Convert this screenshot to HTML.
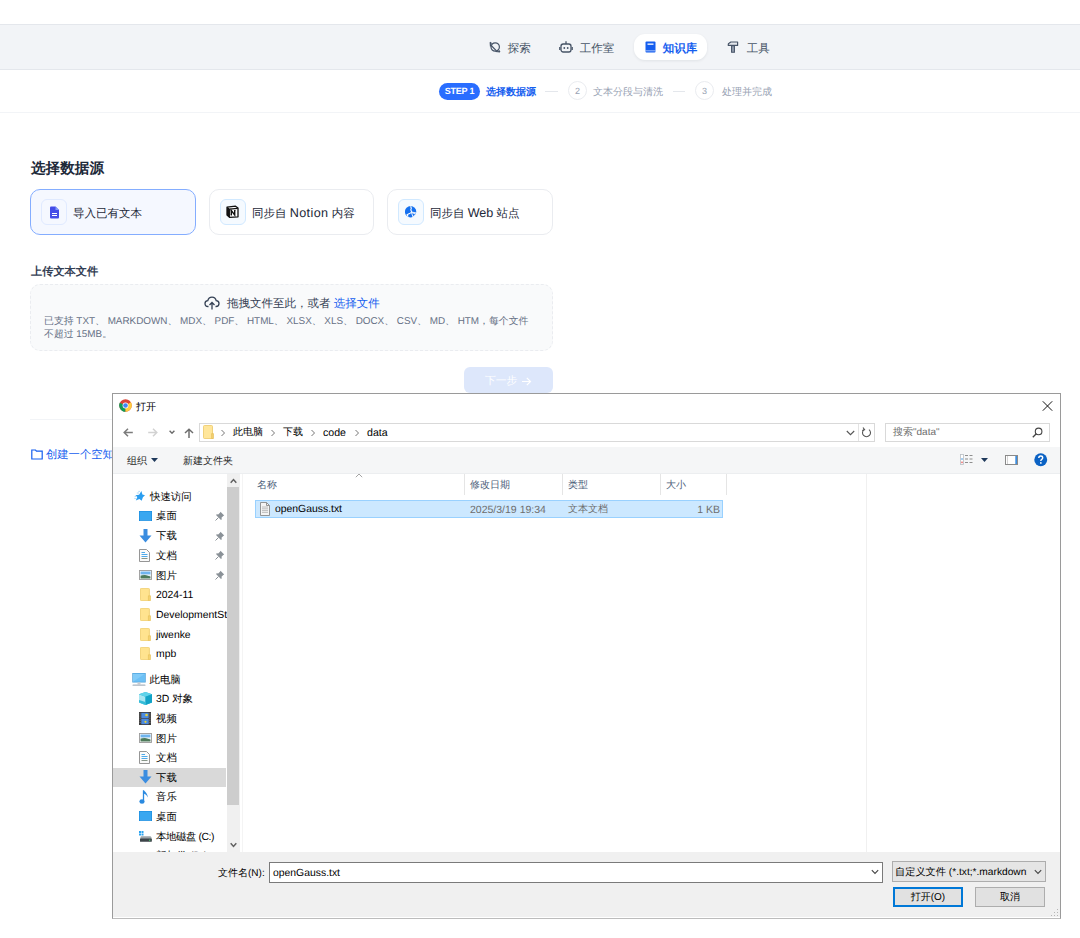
<!DOCTYPE html>
<html><head><meta charset="utf-8">
<style>
*{box-sizing:border-box;margin:0;padding:0}
html,body{width:1080px;height:938px;overflow:hidden;background:#fff;font-family:"Liberation Sans",sans-serif;position:relative;text-rendering:geometricPrecision}
.a{position:absolute;white-space:nowrap}
#hdr{left:0;top:24px;width:1080px;height:46px;background:#f2f4f7;border-top:1px solid #e4e7ec;border-bottom:1px solid #e4e7ec}
.nav{font-size:11.5px;color:#475467;line-height:14px;margin-top:1.5px;margin-left:0.7px}
#steps{left:0;top:70px;width:1080px;height:43px;border-bottom:1px solid #f2f4f7}
.st{font-size:10px;line-height:12px;color:#98a2b3;margin-top:1px}
.card{border:1px solid #eaecf0;border-radius:10px;background:#fff;height:46px;top:189px}
.ibox{position:absolute;left:10px;top:9px;width:26px;height:26px;border-radius:6px;background:#f5faff;border:1px solid #d1e9ff}
.ctext{position:absolute;top:16.5px;font-size:11.5px;line-height:14px;color:#1d2939}
/* dialog */
#dlg{left:112px;top:393px;width:949px;height:526px;background:#fff;border:1px solid #9a9a9a;border-bottom-color:#bcbcbc}
.w{font-size:10px;line-height:12px;color:#000}
</style></head><body>

<div id="hdr" class="a"></div>
<!-- nav items -->
<svg class="a" style="left:489px;top:41px" width="12" height="12" viewBox="0 0 12 12"><circle cx="6.2" cy="6" r="4.2" fill="none" stroke="#475467" stroke-width="1.2"/><path d="M1.2 1.2L2.6 2.6M9.8 9.4L11 10.8M1.2 1.2L1.5 5.5M11 10.8L6.5 10.5M2.2 4.5L7.5 9.8" fill="none" stroke="#475467" stroke-width="1.2"/></svg>
<div class="a nav" style="left:507px;top:40px">探索</div>
<svg class="a" style="left:559px;top:40px" width="14" height="13" viewBox="0 0 14 13"><rect x="2" y="4" width="10" height="8" rx="2.2" fill="none" stroke="#475467" stroke-width="1.3"/><path d="M7 1.2V4M0.8 7v3M13.2 7v3" stroke="#475467" stroke-width="1.3"/><circle cx="5.3" cy="8" r="0.9" fill="#475467"/><circle cx="8.7" cy="8" r="0.9" fill="#475467"/></svg>
<div class="a nav" style="left:579px;top:40px">工作室</div>
<div class="a" style="left:634px;top:34px;width:73px;height:26px;border-radius:11px;background:#fff;box-shadow:0 1px 3px rgba(16,24,40,.08)"></div>
<svg class="a" style="left:645px;top:41px" width="11" height="12" viewBox="0 0 11 12"><rect x="0.5" y="0.5" width="10" height="11" rx="1" fill="#155eef"/><rect x="2.5" y="2.5" width="6" height="1.3" fill="#fff"/><rect x="0.5" y="9.3" width="10" height="1" fill="#fff" opacity=".6"/></svg>
<div class="a nav" style="left:662px;top:40px;color:#155eef;font-weight:bold">知识库</div>
<svg class="a" style="left:727px;top:41px" width="12" height="12" viewBox="0 0 12 12"><path d="M1.3 4.4V3.3Q1.3 2.6 2 2.3L3.9 1H10.6V4.4Z" fill="#e4e7ec" stroke="#475467" stroke-width="1.2" stroke-linejoin="round"/><path d="M4.6 4.6H7.4V11.3H4.6Z" fill="#98a2b3" stroke="#475467" stroke-width="1.1"/></svg>
<div class="a nav" style="left:746px;top:40px">工具</div>

<!-- steps -->
<div id="steps" class="a"></div>
<div class="a" style="left:439px;top:83px;width:41px;height:17px;border-radius:9px;background:#296dff;color:#fff;font-size:9px;font-weight:bold;line-height:17px;text-align:center;letter-spacing:-0.2px">STEP 1</div>
<div class="a st" style="left:486px;top:85.5px;color:#155eef;font-weight:bold">选择数据源</div>
<div class="a" style="left:545px;top:91px;width:13px;height:1px;background:#e4e7ec"></div>
<div class="a" style="left:568px;top:81px;width:19px;height:19px;border-radius:50%;border:1px solid #eaecf0;font-size:9px;line-height:18px;text-align:center;color:#98a2b3">2</div>
<div class="a st" style="left:593px;top:85.5px">文本分段与清洗</div>
<div class="a" style="left:673px;top:91px;width:12px;height:1px;background:#e4e7ec"></div>
<div class="a" style="left:695px;top:81px;width:19px;height:19px;border-radius:50%;border:1px solid #eaecf0;font-size:9px;line-height:18px;text-align:center;color:#98a2b3">3</div>
<div class="a st" style="left:722px;top:85.5px">处理并完成</div>

<!-- title -->
<div class="a" style="left:31px;top:160px;font-size:14.6px;line-height:18px;font-weight:bold;color:#1d2939">选择数据源</div>

<div class="a card" style="left:30px;width:166px;border-color:#84adff;background:#f5f8ff">
  <div class="ibox" style="background:#f5f8ff;border-color:#e0eaff"></div>
  <svg class="a" style="left:18px;top:16px" width="11" height="13" viewBox="0 0 11 13"><path d="M1 1.5Q1 0.5 2 0.5H6.5L10 4V11.5Q10 12.5 9 12.5H2Q1 12.5 1 11.5z" fill="#444ce7"/><path d="M6.5 0.5V4H10" fill="#8098f9"/><rect x="3" y="7" width="5" height="1" fill="#fff"/><rect x="3" y="9" width="5" height="1" fill="#fff"/></svg>
  <div class="ctext" style="left:42px">导入已有文本</div>
</div>
<div class="a card" style="left:209px;width:165px">
  <div class="ibox"></div>
  <svg class="a" style="left:16px;top:15px" width="13" height="13" viewBox="0 0 13 13"><path d="M1 2.2L9.5 1.2L12 3V11.8L3.5 12.3L1 10z" fill="#fff" stroke="#111" stroke-width="1.3" stroke-linejoin="round"/><path d="M1.3 2.4L3.3 4.2V12M3.3 4.2L11.8 3.4" fill="none" stroke="#111" stroke-width="1.3"/><path d="M1 2.5V10L3.3 12V4.2z" fill="#111"/><path d="M5.3 10V5.6L8.7 10V5.5" fill="none" stroke="#111" stroke-width="1.4"/><path d="M4.6 10H6M4.6 5.6H6M8 5.5H9.5" stroke="#111" stroke-width="0.9"/></svg>
  <div class="ctext" style="left:42px;top:15.5px">同步自 <span style="font-size:12.6px;letter-spacing:0.4px">Notion</span> 内容</div>
</div>
<div class="a card" style="left:387px;width:166px">
  <div class="ibox"></div>
  <svg class="a" style="left:17px;top:16px" width="13" height="13" viewBox="0 0 13 13"><circle cx="5.6" cy="5.7" r="5.7" fill="#1570ef"/><path d="M5.6 0.3L6.3 2.3L5.8 3.8L6.7 6.1L4.5 7.6L2 8.7L3.2 10.5" fill="none" stroke="#fff" stroke-width="1.1" stroke-linejoin="round"/><path d="M7 6.1L11.5 7" stroke="#fff" stroke-width="0.9"/><path d="M6.4 6.4L11.6 8.4L9 9.5L8.2 11.6z" fill="#1570ef" stroke="#fff" stroke-width="0.9" stroke-linejoin="round"/></svg>
  <div class="ctext" style="left:42px;top:15.5px">同步自 <span style="font-size:12.6px">Web</span> 站点</div>
</div>

<div class="a" style="left:31px;top:265.5px;font-size:11.2px;line-height:13px;font-weight:bold;color:#344054">上传文本文件</div>
<div class="a" style="left:30px;top:284px;width:523px;height:67px;border:1px dashed #eaecf0;border-radius:10px;background:#f9fafb"></div>
<svg class="a" style="left:204px;top:296px" width="16" height="14" viewBox="0 0 16 14"><path d="M4.5 10.5H4Q1 10.5 1 7.5Q1 4.8 3.8 4.6Q4.6 1.2 8 1.2Q11.4 1.2 12.2 4.6Q15 4.8 15 7.5Q15 10.5 12 10.5H11.5" fill="none" stroke="#344054" stroke-width="1.3"/><path d="M8 13.5V6.5M5.5 9L8 6.5L10.5 9" fill="none" stroke="#344054" stroke-width="1.3"/></svg>
<div class="a" style="left:227px;top:298px;font-size:11.5px;line-height:13px;color:#344054">拖拽文件至此，或者 <span style="color:#155eef">选择文件</span></div>
<div class="a" style="left:44px;top:315px;font-size:9.9px;line-height:13px;color:#667085">已支持 TXT、 MARKDOWN、 MDX、 PDF、 HTML、 XLSX、 XLS、 DOCX、 CSV、 MD、 HTM，每个文件<br>不超过 15MB。</div>

<div class="a" style="left:464px;top:367px;width:89px;height:26px;border-radius:6px;background:#dde7fb"></div><div class="a" style="left:485px;top:374px;font-size:10.8px;line-height:14px;color:#fff">下一步</div><svg class="a" style="left:521px;top:376px" width="11" height="11" viewBox="0 0 11 11"><path d="M1 5.5H9.5M5.8 1.8L9.5 5.5L5.8 9.2" fill="none" stroke="#fff" stroke-width="1.2"/></svg>

<div class="a" style="left:30px;top:419px;width:523px;height:1px;background:#f2f4f7"></div>
<svg class="a" style="left:31px;top:449px" width="12" height="11" viewBox="0 0 12 11"><path d="M0.8 1H4.5L5.5 2.2H11.2V10H0.8z" fill="none" stroke="#155eef" stroke-width="1.2"/></svg>
<div class="a" style="left:46px;top:448.5px;font-size:11.3px;line-height:13px;color:#155eef">创建一个空知识库</div>

<!-- ====== DIALOG ====== -->
<div id="dlg" class="a"></div>
<!-- title bar -->
<svg class="a" style="left:119px;top:399px" width="13" height="13" viewBox="0 0 26 26"><circle cx="13" cy="13" r="12.5" fill="#db4437"/><path d="M13 13 L2.2 19.3 A12.5 12.5 0 0 0 13 25.5z" fill="#0f9d58"/><path d="M13 13 L2.2 19.3 A12.5 12.5 0 0 1 1.6 7.5 L7 10z" fill="#0f9d58"/><path d="M13 13 L23.8 6.7 A12.5 12.5 0 0 1 13 25.5z" fill="#ffcd40"/><circle cx="13" cy="13" r="5.8" fill="#fff"/><circle cx="13" cy="13" r="4.6" fill="#4285f4"/></svg>
<div class="a w" style="left:136px;top:401.5px;font-size:10px">打开</div>
<svg class="a" style="left:1042px;top:401px" width="11" height="10" viewBox="0 0 11 10"><path d="M0.8 0.3L10.2 9.7M10.2 0.3L0.8 9.7" stroke="#111" stroke-width="1"/></svg>
<!-- nav row -->
<svg class="a" style="left:123px;top:428px" width="10" height="9" viewBox="0 0 10 9"><path d="M9.8 4.5H1.2M5 0.7L1.2 4.5L5 8.3" fill="none" stroke="#7b7b7b" stroke-width="1.5"/></svg>
<svg class="a" style="left:148px;top:428px" width="10" height="9" viewBox="0 0 10 9"><path d="M0.2 4.5H8.8M5 0.7L8.8 4.5L5 8.3" fill="none" stroke="#d2d2d2" stroke-width="1.5"/></svg>
<svg class="a" style="left:169px;top:430px" width="6" height="4" viewBox="0 0 6 4"><path d="M0.6 0.8L3 3.2L5.4 0.8" fill="none" stroke="#6a6a6a" stroke-width="1.4"/></svg>
<svg class="a" style="left:184px;top:428px" width="10" height="10" viewBox="0 0 10 10"><path d="M5 10V1.2M1 5L5 1.2L9 5" fill="none" stroke="#6e6e6e" stroke-width="1.5"/></svg>
<div class="a" style="left:199px;top:423px;width:676px;height:19px;border:1px solid #d9d9d9"></div>
<svg class="a" style="left:203px;top:425px" width="11" height="14" viewBox="0 0 11 14"><path d="M0.5 1.5Q0.5 0.5 1.5 0.5H8.5Q9.5 0.5 9.5 1.5V13.5H1.5Q0.5 13.5 0.5 12.5z" fill="#ffe69a" stroke="#ecc866" stroke-width="0.8"/><path d="M8.6 8.6H10.5V13.5H8.6z" fill="#f3d170" stroke="#e2bb55" stroke-width="0.6"/></svg>
<svg class="a" style="left:220px;top:429px" width="6" height="8" viewBox="0 0 6 8"><path d="M1.5 1L4.5 4L1.5 7" fill="none" stroke="#777" stroke-width="1"/></svg>
<div class="a w" style="left:233px;top:427px;font-size:10px">此电脑</div>
<svg class="a" style="left:270px;top:429px" width="6" height="8" viewBox="0 0 6 8"><path d="M1.5 1L4.5 4L1.5 7" fill="none" stroke="#777" stroke-width="1"/></svg>
<div class="a w" style="left:283px;top:427px;font-size:10px">下载</div>
<svg class="a" style="left:310px;top:429px" width="6" height="8" viewBox="0 0 6 8"><path d="M1.5 1L4.5 4L1.5 7" fill="none" stroke="#777" stroke-width="1"/></svg>
<div class="a w" style="left:323px;top:427px;font-size:10.6px">code</div>
<svg class="a" style="left:354px;top:429px" width="6" height="8" viewBox="0 0 6 8"><path d="M1.5 1L4.5 4L1.5 7" fill="none" stroke="#777" stroke-width="1"/></svg>
<div class="a w" style="left:367px;top:427px;font-size:10.6px">data</div>
<svg class="a" style="left:846px;top:430px" width="9" height="6" viewBox="0 0 9 6"><path d="M0.8 1L4.5 4.7L8.2 1" fill="none" stroke="#555" stroke-width="1.1"/></svg>
<div class="a" style="left:858px;top:424px;width:1px;height:17px;background:#e3e3e3"></div>
<svg class="a" style="left:861px;top:427px" width="11" height="11" viewBox="0 0 11 11"><path d="M3 2.6A4 4 0 1 0 8 2.6" fill="none" stroke="#555" stroke-width="1.1"/><path d="M2 0.5L3.6 2.8L1.2 3.6" fill="none" stroke="#555" stroke-width="1.1"/></svg>
<div class="a" style="left:885px;top:423px;width:165px;height:19px;border:1px solid #d9d9d9"></div>
<div class="a w" style="left:893px;top:427px;font-size:10px;color:#6d6d6d">搜索"data"</div>
<svg class="a" style="left:1032px;top:427px" width="11" height="11" viewBox="0 0 11 11"><circle cx="6.6" cy="4.4" r="3.3" fill="none" stroke="#444" stroke-width="1.1"/><path d="M4.3 6.7L0.8 10.2" stroke="#444" stroke-width="1.3"/></svg>
<!-- toolbar band -->
<div class="a" style="left:113px;top:447px;width:947px;height:27px;background:#f5f6f7;border-bottom:1px solid #eceef0"></div>
<div class="a w" style="left:127px;top:455.5px;font-size:10px;color:#1e1e1e">组织</div>
<svg class="a" style="left:151px;top:458px" width="7" height="4" viewBox="0 0 7 4"><path d="M0 0H7L3.5 4z" fill="#1e395b"/></svg>
<div class="a w" style="left:183px;top:455.5px;font-size:10px;color:#1e1e1e">新建文件夹</div>
<svg class="a" style="left:960px;top:454px" width="13" height="11" viewBox="0 0 13 11"><rect x="0.5" y="0.5" width="3" height="10" fill="#fff" stroke="#b9bec4" stroke-width="0.8"/><rect x="1" y="4.2" width="2" height="1.6" fill="#8fc3f0"/><rect x="1" y="7.6" width="2" height="1.6" fill="#f08c8c"/><path d="M5 1.5H8M9.5 1.5H12.5M5 5H8M9.5 5H12.5M5 8.5H8M9.5 8.5H12.5" stroke="#8e8e8e" stroke-width="1.1"/></svg>
<svg class="a" style="left:981px;top:458px" width="7" height="4" viewBox="0 0 7 4"><path d="M0 0H7L3.5 4z" fill="#1e395b"/></svg>
<svg class="a" style="left:1005px;top:454.5px" width="13" height="10" viewBox="0 0 13 10"><rect x="0.5" y="0.5" width="12" height="9" fill="#fff" stroke="#8a8a8a" stroke-width="1"/><rect x="10.3" y="1" width="1.7" height="8" fill="#3d8ee0"/><path d="M2.5 1V9" stroke="#c8c8c8" stroke-width="0.8"/></svg>
<svg class="a" style="left:1034px;top:453px" width="13.5" height="13.5" viewBox="0 0 14 14"><circle cx="7" cy="7" r="6.7" fill="#0b62c4"/><path d="M5 5.3Q5 3.2 7 3.2Q9 3.2 9 5Q9 6 8 6.6Q7.1 7.1 7.1 8.2" fill="none" stroke="#fff" stroke-width="1.5"/><circle cx="7.1" cy="10.3" r="0.9" fill="#fff"/></svg>


<div class="a" style="left:113px;top:474px;width:114px;height:378px;overflow:hidden">
<div class="a" style="left:0px;top:293.5px;width:113px;height:19.5px;background:#d9d9d9"></div>
<svg class="a" style="left:21px;top:16px" width="12" height="12" viewBox="0 0 12 12"><path d="M7.4 1.1L8.4 4.6L11 5.2L8.9 7.3L7.7 10.7L5.4 8.9L1.8 10.4L3.3 7.1L1.4 5.2L5.1 4.7Z" fill="#2b9ef0"/><path d="M4.3 1.4H6M2.8 3H5M0.6 6.4H2.2M0.3 8.4H1.9" stroke="#9fd0f5" stroke-width="0.8"/></svg>
<div class="a w" style="left:37px;top:17.5px;font-size:10.4px">快速访问</div>
<svg class="a" style="left:26px;top:36.7px" width="13" height="10" viewBox="0 0 13 10"><rect x="0" y="0" width="13" height="10" fill="#1a8ce0"/><rect x="0.6" y="0.6" width="11.8" height="8.2" fill="#39a7f0"/><path d="M1 9.2H12" stroke="#7fc6f5" stroke-width="0.5"/></svg>
<div class="a w" style="left:43px;top:37.2px;font-size:10.4px">桌面</div>
<svg class="a" style="left:102px;top:36.7px" width="10" height="10" viewBox="0 0 10 10"><path d="M5.5 0.8L9.2 4.5L8.2 5L6.5 6.8L6.8 8.2L6 9L1 4L1.8 3.2L3.2 3.5L5 1.8z" fill="#8b9298"/><path d="M3.5 6.5L0.5 9.5" stroke="#8b9298" stroke-width="1"/></svg>
<svg class="a" style="left:26px;top:54.5px" width="13" height="14" viewBox="0 0 13 14"><path d="M4.5 0H8.5V6.5H12.5L6.5 13.5L0.5 6.5H4.5z" fill="#3b8de0"/></svg>
<div class="a w" style="left:43px;top:57.0px;font-size:10.4px">下载</div>
<svg class="a" style="left:102px;top:56.5px" width="10" height="10" viewBox="0 0 10 10"><path d="M5.5 0.8L9.2 4.5L8.2 5L6.5 6.8L6.8 8.2L6 9L1 4L1.8 3.2L3.2 3.5L5 1.8z" fill="#8b9298"/><path d="M3.5 6.5L0.5 9.5" stroke="#8b9298" stroke-width="1"/></svg>
<svg class="a" style="left:26px;top:74.7px" width="11" height="13" viewBox="0 0 11 13"><path d="M0.5 0.5H7.5L10.5 3.5V12.5H0.5z" fill="#fafafa" stroke="#8a8a8a" stroke-width="0.9"/><path d="M2.5 3.5H6M2.5 5.5H8.5M2.5 7.5H8.5" stroke="#3aa0e8" stroke-width="0.9"/><path d="M2.5 9.5H8.5" stroke="#7a8a7a" stroke-width="0.9"/></svg>
<div class="a w" style="left:43px;top:76.7px;font-size:10.4px">文档</div>
<svg class="a" style="left:102px;top:76.2px" width="10" height="10" viewBox="0 0 10 10"><path d="M5.5 0.8L9.2 4.5L8.2 5L6.5 6.8L6.8 8.2L6 9L1 4L1.8 3.2L3.2 3.5L5 1.8z" fill="#8b9298"/><path d="M3.5 6.5L0.5 9.5" stroke="#8b9298" stroke-width="1"/></svg>
<svg class="a" style="left:26px;top:96.0px" width="13" height="10" viewBox="0 0 13 10"><rect x="0.5" y="0.5" width="12" height="9" fill="#fff" stroke="#9a9a9a" stroke-width="0.9"/><rect x="1.5" y="1.5" width="10" height="3" fill="#6fb4ee"/><path d="M1.5 5.5Q5 3.8 11.5 6.5V8.5H1.5z" fill="#4d7a5a"/><path d="M1.5 4.5H11.5V5.8Q6 4.2 1.5 5.5z" fill="#c8dff0"/></svg>
<div class="a w" style="left:43px;top:96.5px;font-size:10.4px">图片</div>
<svg class="a" style="left:102px;top:96px" width="10" height="10" viewBox="0 0 10 10"><path d="M5.5 0.8L9.2 4.5L8.2 5L6.5 6.8L6.8 8.2L6 9L1 4L1.8 3.2L3.2 3.5L5 1.8z" fill="#8b9298"/><path d="M3.5 6.5L0.5 9.5" stroke="#8b9298" stroke-width="1"/></svg>
<svg class="a" style="left:27px;top:114.2px" width="11" height="13" viewBox="0 0 11 13"><path d="M0.4 1.2Q0.4 0.4 1.2 0.4H8.6Q9.4 0.4 9.4 1.2V12.6H1.2Q0.4 12.6 0.4 11.8z" fill="#ffe38f" stroke="#efcb66" stroke-width="0.8"/><path d="M8.4 7.8H10.6V12.6H8.4z" fill="#f4d273" stroke="#e6c055" stroke-width="0.6"/></svg>
<div class="a w" style="left:43px;top:116.2px;font-size:10.4px">2024-11</div>
<svg class="a" style="left:27px;top:133.9px" width="11" height="13" viewBox="0 0 11 13"><path d="M0.4 1.2Q0.4 0.4 1.2 0.4H8.6Q9.4 0.4 9.4 1.2V12.6H1.2Q0.4 12.6 0.4 11.8z" fill="#ffe38f" stroke="#efcb66" stroke-width="0.8"/><path d="M8.4 7.8H10.6V12.6H8.4z" fill="#f4d273" stroke="#e6c055" stroke-width="0.6"/></svg>
<div class="a w" style="left:43px;top:135.9px;font-size:10.4px">DevelopmentStudio</div>
<svg class="a" style="left:27px;top:153.6px" width="11" height="13" viewBox="0 0 11 13"><path d="M0.4 1.2Q0.4 0.4 1.2 0.4H8.6Q9.4 0.4 9.4 1.2V12.6H1.2Q0.4 12.6 0.4 11.8z" fill="#ffe38f" stroke="#efcb66" stroke-width="0.8"/><path d="M8.4 7.8H10.6V12.6H8.4z" fill="#f4d273" stroke="#e6c055" stroke-width="0.6"/></svg>
<div class="a w" style="left:43px;top:155.6px;font-size:10.4px">jiwenke</div>
<svg class="a" style="left:27px;top:173.3px" width="11" height="13" viewBox="0 0 11 13"><path d="M0.4 1.2Q0.4 0.4 1.2 0.4H8.6Q9.4 0.4 9.4 1.2V12.6H1.2Q0.4 12.6 0.4 11.8z" fill="#ffe38f" stroke="#efcb66" stroke-width="0.8"/><path d="M8.4 7.8H10.6V12.6H8.4z" fill="#f4d273" stroke="#e6c055" stroke-width="0.6"/></svg>
<div class="a w" style="left:43px;top:175.3px;font-size:10.4px">mpb</div>
<svg class="a" style="left:19px;top:198.8px" width="14" height="13" viewBox="0 0 14 13"><rect x="0.3" y="0" width="13.4" height="9.5" fill="#4a9fd8"/><rect x="1" y="0.7" width="12" height="8.1" fill="#6cc0f5"/><path d="M1 0.7H13L1 8.8z" fill="#8fd2fa" opacity=".6"/><rect x="5.5" y="9.5" width="3" height="2" fill="#c9ccd0"/><rect x="0.5" y="11.5" width="13" height="1.3" rx="0.6" fill="#a9b4bf"/></svg>
<div class="a w" style="left:36.5px;top:200.8px;font-size:10.4px">此电脑</div>
<svg class="a" style="left:26px;top:218.1px" width="13" height="13" viewBox="0 0 13 13"><path d="M6.5 0L13 2.3V10.5L6.5 13L0 10.5V2.3z" fill="#1fb6d6"/><path d="M0 2.3L6.5 4.8V13L0 10.5z" fill="#a8e6f2"/><path d="M0 2.3L6.5 0L13 2.3L6.5 4.8z" fill="#5fd3ea"/><path d="M6.5 4.8L13 2.3V10.5L6.5 13z" fill="#12a3c7"/><path d="M0 8L6.5 10V13L0 10.5z" fill="#36bcd8"/></svg>
<div class="a w" style="left:43px;top:220.1px;font-size:10.4px">3D 对象</div>
<svg class="a" style="left:26px;top:237.8px" width="12" height="13" viewBox="0 0 12 13"><rect x="0" y="0" width="12" height="13" fill="#3d3d3d"/><rect x="2.3" y="0.8" width="7.4" height="5.4" fill="#4b8be0"/><rect x="2.3" y="6.8" width="7.4" height="5.4" fill="#4b8be0"/><circle cx="7.5" cy="3" r="1.3" fill="#e6d23a"/><circle cx="6.5" cy="9.8" r="1.1" fill="#e6d23a"/><path d="M1.1 1.5V12M10.9 1.5V12" stroke="#aaa" stroke-width="0.8" stroke-dasharray="0.9 1.2"/></svg>
<div class="a w" style="left:43px;top:239.8px;font-size:10.4px">视频</div>
<svg class="a" style="left:26px;top:259.0px" width="13" height="10" viewBox="0 0 13 10"><rect x="0.5" y="0.5" width="12" height="9" fill="#fff" stroke="#9a9a9a" stroke-width="0.9"/><rect x="1.5" y="1.5" width="10" height="3" fill="#6fb4ee"/><path d="M1.5 5.5Q5 3.8 11.5 6.5V8.5H1.5z" fill="#4d7a5a"/><path d="M1.5 4.5H11.5V5.8Q6 4.2 1.5 5.5z" fill="#c8dff0"/></svg>
<div class="a w" style="left:43px;top:259.5px;font-size:10.4px">图片</div>
<svg class="a" style="left:26px;top:277.1px" width="11" height="13" viewBox="0 0 11 13"><path d="M0.5 0.5H7.5L10.5 3.5V12.5H0.5z" fill="#fafafa" stroke="#8a8a8a" stroke-width="0.9"/><path d="M2.5 3.5H6M2.5 5.5H8.5M2.5 7.5H8.5" stroke="#3aa0e8" stroke-width="0.9"/><path d="M2.5 9.5H8.5" stroke="#7a8a7a" stroke-width="0.9"/></svg>
<div class="a w" style="left:43px;top:279.1px;font-size:10.4px">文档</div>
<svg class="a" style="left:26px;top:296.1px" width="13" height="14" viewBox="0 0 13 14"><path d="M4.5 0H8.5V6.5H12.5L6.5 13.5L0.5 6.5H4.5z" fill="#3b8de0"/></svg>
<div class="a w" style="left:43px;top:298.6px;font-size:10.4px">下载</div>
<svg class="a" style="left:26px;top:315.8px" width="10" height="14" viewBox="0 0 10 14"><path d="M4.5 0.3V10.5" stroke="#2a8ae0" stroke-width="1.3"/><ellipse cx="3" cy="11.5" rx="2.6" ry="2.2" fill="#2a8ae0"/><path d="M4.5 0.3Q8.5 3 8.8 7.5Q7.8 4.5 4.8 3.5z" fill="#2a8ae0"/></svg>
<div class="a w" style="left:43px;top:318.3px;font-size:10.4px">音乐</div>
<svg class="a" style="left:26px;top:337.4px" width="13" height="10" viewBox="0 0 13 10"><rect x="0" y="0" width="13" height="10" fill="#1a8ce0"/><rect x="0.6" y="0.6" width="11.8" height="8.2" fill="#39a7f0"/><path d="M1 9.2H12" stroke="#7fc6f5" stroke-width="0.5"/></svg>
<div class="a w" style="left:43px;top:337.9px;font-size:10.4px">桌面</div>
<svg class="a" style="left:26px;top:356.6px" width="13" height="11" viewBox="0 0 13 11"><rect x="0" y="0" width="2" height="2" fill="#2aa3f0"/><rect x="2.5" y="0" width="2" height="2" fill="#2aa3f0"/><rect x="0" y="2.5" width="2" height="2" fill="#2aa3f0"/><rect x="2.5" y="2.5" width="2" height="2" fill="#2aa3f0"/><path d="M1.5 6.2Q1.5 5.2 2.5 5.2H11Q12 5.2 12.5 6.5V10H1z" fill="#9aa3a8"/><rect x="1" y="7.6" width="11.8" height="3.2" rx="0.6" fill="#3d4449"/><rect x="10" y="8.7" width="1.3" height="1" fill="#4be070"/></svg>
<div class="a w" style="left:43px;top:357.6px;font-size:10.4px;letter-spacing:-0.4px">本地磁盘 (C:)</div>
<svg class="a" style="left:26px;top:376.3px" width="13" height="11" viewBox="0 0 13 11"><path d="M1.5 6.2Q1.5 5.2 2.5 5.2H11Q12 5.2 12.5 6.5V10H1z" fill="#9aa3a8"/><rect x="1" y="7.6" width="11.8" height="3.2" rx="0.6" fill="#3d4449"/></svg>
<div class="a w" style="left:43px;top:377.3px;font-size:10.4px">新加卷 (D:)</div>
</div>
<div class="a" style="left:227px;top:474px;width:13px;height:378px;background:#f0f0f0"></div><div class="a" style="left:242px;top:474px;width:1px;height:378px;background:#f4f4f4"></div>
<div class="a" style="left:227px;top:487px;width:12px;height:318px;background:#cdcdcd"></div>
<svg class="a" style="left:230px;top:478px" width="7" height="6" viewBox="0 0 7 6"><path d="M0.7 4.8L3.5 1.6L6.3 4.8" fill="none" stroke="#606060" stroke-width="1.5"/></svg>
<svg class="a" style="left:230px;top:842px" width="7" height="6" viewBox="0 0 7 6"><path d="M0.7 1.2L3.5 4.4L6.3 1.2" fill="none" stroke="#606060" stroke-width="1.5"/></svg>
<svg class="a" style="left:355px;top:473px" width="8" height="5" viewBox="0 0 8 5"><path d="M0.8 4.2L4 1L7.2 4.2" fill="none" stroke="#9a9a9a" stroke-width="0.9"/></svg>
<div class="a w" style="left:257px;top:480px;font-size:10px;color:#4c607a">名称</div>
<div class="a" style="left:464px;top:474px;width:1px;height:21px;background:#e5e5e5"></div>
<div class="a" style="left:562px;top:474px;width:1px;height:21px;background:#e5e5e5"></div>
<div class="a" style="left:660px;top:474px;width:1px;height:21px;background:#e5e5e5"></div>
<div class="a" style="left:726px;top:474px;width:1px;height:21px;background:#e5e5e5"></div>
<div class="a w" style="left:470px;top:480px;font-size:10px;color:#4c607a">修改日期</div>
<div class="a w" style="left:568px;top:480px;font-size:10px;color:#4c607a">类型</div>
<div class="a w" style="left:666px;top:480px;font-size:10px;color:#4c607a">大小</div>
<div class="a" style="left:866px;top:474px;width:1px;height:378px;background:#f0f0f0"></div>
<div class="a" style="left:255px;top:500px;width:468px;height:18px;background:#cce8ff;border:1px solid #99d1ff"></div>
<svg class="a" style="left:260px;top:502px" width="10" height="14" viewBox="0 0 10 14"><path d="M0.5 0.5H6.5L9.5 3.5V13.5H0.5z" fill="#f4f4f4" stroke="#8a8a8a" stroke-width="0.9"/><path d="M6.5 0.5V3.5H9.5" fill="none" stroke="#8a8a8a" stroke-width="0.9"/><path d="M2 5H8M2 6.8H8M2 8.6H8M2 10.4H8" stroke="#b0b0b0" stroke-width="0.8"/></svg>
<div class="a w" style="left:275px;top:504px;font-size:10.4px">openGauss.txt</div>
<div class="a w" style="left:470px;top:504px;font-size:10.5px;color:#6d6d6d">2025/3/19 19:34</div>
<div class="a w" style="left:568px;top:504px;font-size:10px;color:#6d6d6d">文本文档</div>
<div class="a w" style="left:690px;top:504px;width:30px;text-align:right;font-size:10.5px;color:#6d6d6d">1 KB</div>
<div class="a" style="left:113px;top:852px;width:947px;height:65px;background:#f0f0f0"></div>
<div class="a w" style="left:218px;top:867.5px;font-size:10px">文件名(N):</div>
<div class="a" style="left:269px;top:862px;width:614px;height:21px;background:#fff;border:1px solid #7a7a7a"></div>
<div class="a w" style="left:273px;top:867.5px;font-size:10.4px">openGauss.txt</div>
<svg class="a" style="left:871px;top:869px" width="8" height="6" viewBox="0 0 8 6"><path d="M0.8 1.2L4 4.4L7.2 1.2" fill="none" stroke="#444" stroke-width="1.1"/></svg>
<div class="a" style="left:892px;top:861px;width:154px;height:21px;background:#e5e5e5;border:1px solid #adadad;overflow:hidden"></div>
<div class="a w" style="left:895px;top:867px;width:132px;overflow:hidden;font-size:10.2px">自定义文件 (*.txt;*.markdown;*.mdx)</div>
<svg class="a" style="left:1034px;top:869px" width="8" height="6" viewBox="0 0 8 6"><path d="M0.8 1.2L4 4.4L7.2 1.2" fill="none" stroke="#444" stroke-width="1.1"/></svg>
<div class="a" style="left:893px;top:887px;width:70px;height:20px;background:#e1e1e1;border:2px solid #0078d7;font-size:10px;line-height:18px;text-align:center;color:#000">打开(O)</div>
<div class="a" style="left:975px;top:887px;width:70px;height:20px;background:#e1e1e1;border:1px solid #adadad;font-size:10px;line-height:20px;text-align:center;color:#000">取消</div>
<svg class="a" style="left:1051px;top:908px" width="8" height="8" viewBox="0 0 8 8"><path d="M6 1h1v1h-1zM3 4h1v1h-1zM6 4h1v1h-1zM0 7h1v1h-1zM3 7h1v1h-1zM6 7h1v1h-1z" fill="#b5b5b5"/></svg>
</body></html>
